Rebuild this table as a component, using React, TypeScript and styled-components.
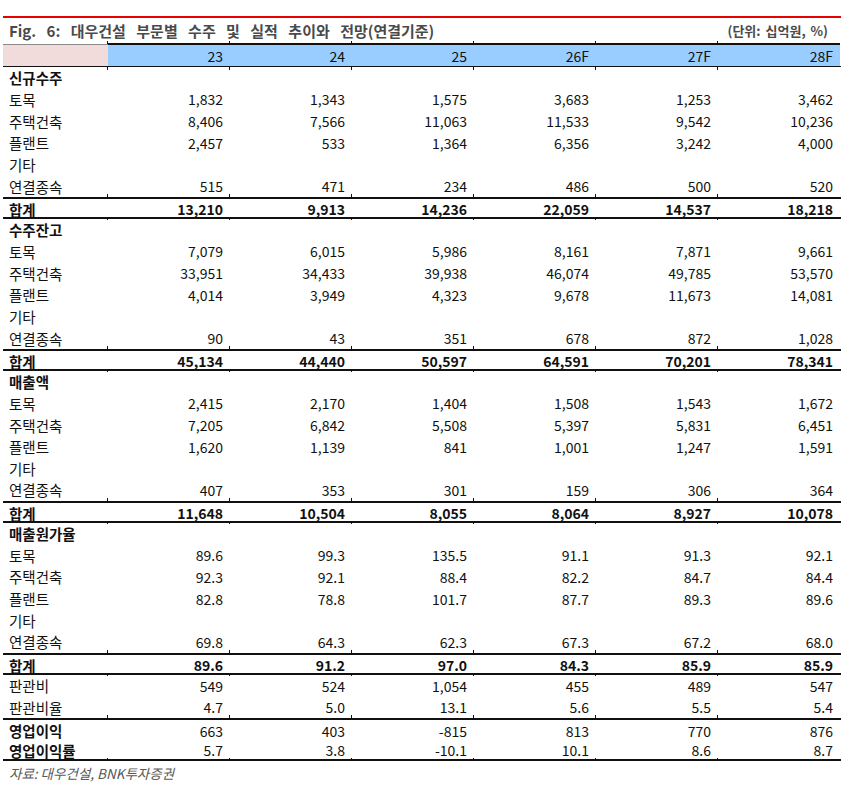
import React from 'react';
import styled, { createGlobalStyle, css } from 'styled-components';

const GlobalStyle = createGlobalStyle`
    body {
        margin: 0;
        background: #ffffff;
        font-family: "Noto Sans CJK KR", "Noto Sans", sans-serif;
        color: #111111;
    }
`;

const COLS = '105px repeat(6, 122px)';

const Page = styled.div`
    width: 838px;
    padding: 16px 0 0 3px;
`;

const RedRule = styled.div`
    height: 2px;
    background: #e60000;
`;

const TitleBar = styled.div`
    display: flex;
    align-items: center;
    justify-content: space-between;
    height: 25px;
    padding: 0 13px 0 6px;
    color: #4a4a4a;
    font-weight: 700;
`;

const Title = styled.span`
    font-size: 15px;
    word-spacing: 7px;
`;

const Unit = styled.span`
    font-size: 13px;
    word-spacing: 2px;
`;

const tick = css`
    content: '';
    position: absolute;
    right: 0;
    width: 1px;
    background: #111111;
`;

const HeaderRow = styled.div`
    display: grid;
    grid-template-columns: ${COLS};
    height: 24px;
    border-bottom: 1px solid #111111;
    box-sizing: border-box;
`;

const HeaderCell = styled.div<{ $blank?: boolean }>`
    position: relative;
    display: flex;
    align-items: center;
    justify-content: flex-end;
    padding-right: 7px;
    font-size: 14px;
    color: #111111;
    background: ${(p) => (p.$blank ? '#f2dcdb' : '#99ccff')};
    border-top: ${(p) => (p.$blank ? '1px solid #8a8a8a' : '2px solid #111111')};
    margin-top: ${(p) => (p.$blank ? '1px' : '0')};

    &:not(:last-child)::before {
        ${tick};
        top: -4px;
        height: 3px;
    }
    &:not(:last-child)::after {
        ${tick};
        bottom: -4px;
        height: 3px;
    }
`;

const Row = styled.div<{ $h: number; $top?: boolean; $bottom?: boolean }>`
    display: grid;
    grid-template-columns: ${COLS};
    height: ${(p) => p.$h}px;
    box-sizing: border-box;
    border-top: ${(p) => (p.$top ? '2px solid #111111' : 'none')};
    border-bottom: ${(p) => (p.$bottom ? '2px solid #111111' : 'none')};
`;

const Cell = styled.div<{ $label?: boolean; $bold?: boolean; $tickTop?: boolean; $tickBottom?: boolean }>`
    position: relative;
    display: flex;
    align-items: center;
    justify-content: ${(p) => (p.$label ? 'flex-start' : 'flex-end')};
    padding: ${(p) => (p.$label ? '0 0 0 6px' : '0 7px 0 0')};
    font-size: ${(p) => (p.$label ? '14.5px' : '14px')};
    font-weight: ${(p) => (p.$bold ? 700 : 400)};
    white-space: nowrap;

    ${(p) =>
        p.$tickTop &&
        css`
            &:not(:last-child)::before {
                ${tick};
                top: -5px;
                height: 4px;
            }
        `}
    ${(p) =>
        p.$tickBottom &&
        css`
            &:not(:last-child)::after {
                ${tick};
                bottom: 0;
                height: 3px;
            }
        `}
`;

const Source = styled.div`
    padding: 2px 0 0 6px;
    font-size: 13.5px;
    font-style: italic;
    color: #595959;
`;

type Kind = 'section' | 'item' | 'total' | 'strong';

interface Line {
    label: string;
    kind: Kind;
    values?: string[];
    top?: boolean;
    bottom?: boolean;
}

const years = ['23', '24', '25', '26F', '27F', '28F'];

const block = (title: string, rows: string[][], total: string[]): Line[] => [
    { label: title, kind: 'section' },
    ...rows.map((r) => ({ label: r[0], kind: 'item' as Kind, values: r.slice(1) })),
    { label: '합계', kind: 'total', values: total, top: true, bottom: true },
];

const lines: Line[] = [
    ...block(
        '신규수주',
        [
            ['토목', '1,832', '1,343', '1,575', '3,683', '1,253', '3,462'],
            ['주택건축', '8,406', '7,566', '11,063', '11,533', '9,542', '10,236'],
            ['플랜트', '2,457', '533', '1,364', '6,356', '3,242', '4,000'],
            ['기타'],
            ['연결종속', '515', '471', '234', '486', '500', '520'],
        ],
        ['13,210', '9,913', '14,236', '22,059', '14,537', '18,218']
    ),
    ...block(
        '수주잔고',
        [
            ['토목', '7,079', '6,015', '5,986', '8,161', '7,871', '9,661'],
            ['주택건축', '33,951', '34,433', '39,938', '46,074', '49,785', '53,570'],
            ['플랜트', '4,014', '3,949', '4,323', '9,678', '11,673', '14,081'],
            ['기타'],
            ['연결종속', '90', '43', '351', '678', '872', '1,028'],
        ],
        ['45,134', '44,440', '50,597', '64,591', '70,201', '78,341']
    ),
    ...block(
        '매출액',
        [
            ['토목', '2,415', '2,170', '1,404', '1,508', '1,543', '1,672'],
            ['주택건축', '7,205', '6,842', '5,508', '5,397', '5,831', '6,451'],
            ['플랜트', '1,620', '1,139', '841', '1,001', '1,247', '1,591'],
            ['기타'],
            ['연결종속', '407', '353', '301', '159', '306', '364'],
        ],
        ['11,648', '10,504', '8,055', '8,064', '8,927', '10,078']
    ),
    ...block(
        '매출원가율',
        [
            ['토목', '89.6', '99.3', '135.5', '91.1', '91.3', '92.1'],
            ['주택건축', '92.3', '92.1', '88.4', '82.2', '84.7', '84.4'],
            ['플랜트', '82.8', '78.8', '101.7', '87.7', '89.3', '89.6'],
            ['기타'],
            ['연결종속', '69.8', '64.3', '62.3', '67.3', '67.2', '68.0'],
        ],
        ['89.6', '91.2', '97.0', '84.3', '85.9', '85.9']
    ),
    { label: '판관비', kind: 'item', values: ['549', '524', '1,054', '455', '489', '547'] },
    { label: '판관비율', kind: 'item', values: ['4.7', '5.0', '13.1', '5.6', '5.5', '5.4'] },
    { label: '영업이익', kind: 'strong', values: ['663', '403', '-815', '813', '770', '876'], top: true },
    { label: '영업이익률', kind: 'strong', values: ['5.7', '3.8', '-10.1', '10.1', '8.6', '8.7'], bottom: true },
];

const App = () => {
    return (
        <Page>
            <GlobalStyle />
            <RedRule />
            <TitleBar>
                <Title>Fig. 6: 대우건설 부문별 수주 및 실적 추이와 전망(연결기준)</Title>
                <Unit>(단위: 십억원, %)</Unit>
            </TitleBar>

            {/* Year header */}
            <HeaderRow>
                <HeaderCell $blank />
                {years.map((y) => (
                    <HeaderCell key={y}>{y}</HeaderCell>
                ))}
            </HeaderRow>

            {/* Body rows */}
            {lines.map((line, i) => {
                const next = lines[i + 1];
                const isTotal = line.kind === 'total';
                const h = isTotal ? 22 : 21.67;
                const labelBold = line.kind !== 'item';
                const tickBottom = !!next && !!next.top && !line.bottom;
                const values = line.values ?? ['', '', '', '', '', ''];
                return (
                    <Row key={i} $h={h} $top={line.top} $bottom={line.bottom}>
                        <Cell $label $bold={labelBold} $tickTop={line.top} $tickBottom={tickBottom || line.bottom}>
                            {line.label}
                        </Cell>
                        {values.map((v, j) => (
                            <Cell
                                key={j}
                                $bold={isTotal}
                                $tickTop={line.top}
                                $tickBottom={tickBottom || line.bottom}
                            >
                                {v}
                            </Cell>
                        ))}
                    </Row>
                );
            })}

            <Source>자료: 대우건설, BNK투자증권</Source>
        </Page>
    );
};

export default App;
